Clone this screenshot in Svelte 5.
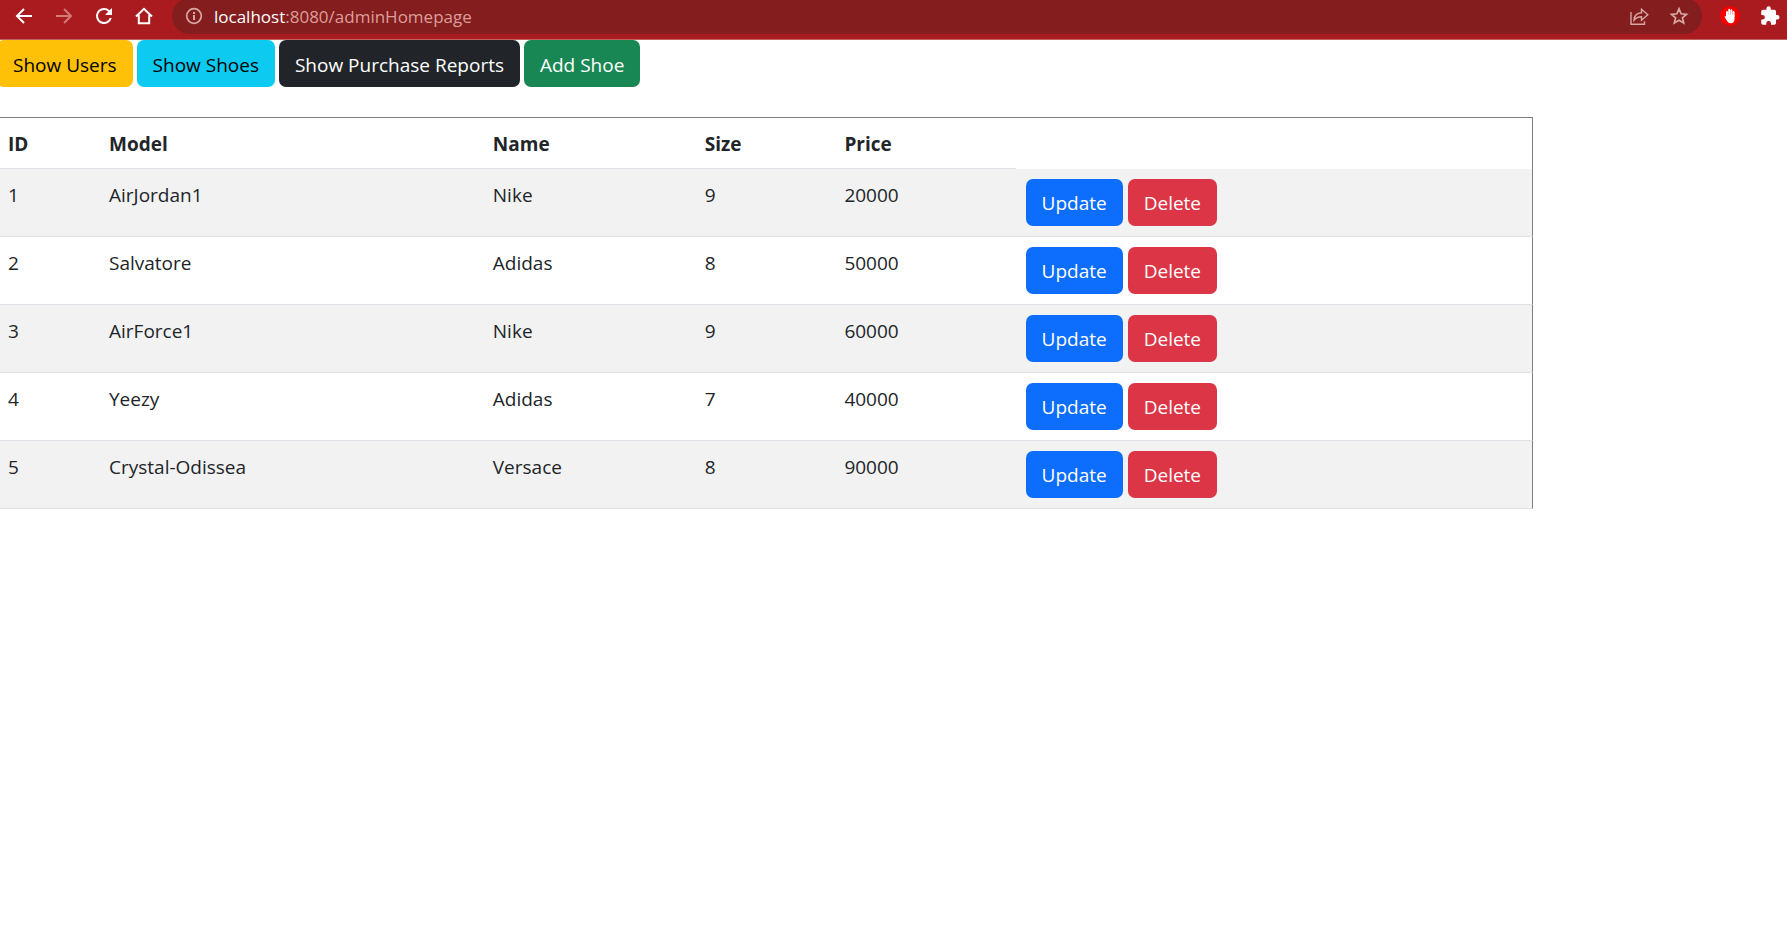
<script>
  const actions = [
    { label: 'Show Users', kind: 'warning' },
    { label: 'Show Shoes', kind: 'info' },
    { label: 'Show Purchase Reports', kind: 'dark' },
    { label: 'Add Shoe', kind: 'success' },
  ];

  const shoes = [
    { id: 1, model: 'AirJordan1', name: 'Nike', size: 9, price: 20000 },
    { id: 2, model: 'Salvatore', name: 'Adidas', size: 8, price: 50000 },
    { id: 3, model: 'AirForce1', name: 'Nike', size: 9, price: 60000 },
    { id: 4, model: 'Yeezy', name: 'Adidas', size: 7, price: 40000 },
    { id: 5, model: 'Crystal-Odissea', name: 'Versace', size: 8, price: 90000 },
  ];
</script>

<header class="toolbar">
  <button class="icon" aria-label="Back">
    <svg viewBox="0 0 24 24"><path d="M20 12H5M12 5l-7 7 7 7" class="line" /></svg>
  </button>
  <button class="icon faded" aria-label="Forward">
    <svg viewBox="0 0 24 24"><path d="M4 12h15M12 5l7 7-7 7" class="line" /></svg>
  </button>
  <button class="icon" aria-label="Reload">
    <svg viewBox="0 0 24 24"><path fill="currentColor" d="M17.650 6.350A7.960 7.960 0 0 0 12 4a8 8 0 1 0 7.730 10h-2.080A6 6 0 1 1 12 6c1.660 0 3.140.690 4.220 1.780L13 11h7V4z" /></svg>
  </button>
  <button class="icon" aria-label="Home">
    <svg viewBox="0 0 24 24"><path d="M4 12.500L12 4.800l8 7.700M6.800 11v8.200h10.400V11" class="line" /></svg>
  </button>

  <div class="address">
    <button class="icon soft" aria-label="Site information">
      <svg viewBox="0 0 24 24"><circle cx="12" cy="12" r="7.300" class="line thin" /><path fill="currentColor" d="M11 11h2v5h-2zM11 8h2v2h-2z" /></svg>
    </button>
    <div class="url"><span class="host">localhost</span>:8080/adminHomepage</div>
    <button class="icon soft" aria-label="Share">
      <svg viewBox="0 0 24 24"><path d="M4 8v12.200h13.500v-3M7 16.200c.3-4.700 3-7.200 7.500-7.400V5.200l6.300 5.600-6.300 5.400v-3.500c-3.200 0-5.500 1-7.500 3.500z" class="line fine" /></svg>
    </button>
    <button class="icon soft" aria-label="Bookmark">
      <svg viewBox="0 0 24 24"><path d="M12 4.800l2.100 5 5.400.5-4.100 3.500 1.300 5.300-4.700-2.800-4.700 2.800 1.300-5.300-4.100-3.500 5.400-.5z" class="line thin" /></svg>
    </button>
  </div>

  <button class="icon" aria-label="Ad blocker">
    <svg viewBox="0 0 24 24"><circle cx="12" cy="12" r="10" fill="#f80000" /><path d="M9 12V8M11.200 11V5.800M13.400 11V6.200M15.600 12V8" stroke="#fff" stroke-width="1.900" stroke-linecap="round" /><path fill="#fff" d="M8.050 10.500h8.500v4.500c0 2.600-1.200 4.300-3.600 4.300-2 0-3-.8-4-2.500l-2.200-3.600c-.3-.8.5-1.300 1.300-.5z" /></svg>
  </button>
  <button class="icon" aria-label="Extensions">
    <svg viewBox="0 0 24 24"><path fill="currentColor" d="M20.500 11H19V7a2 2 0 0 0-2-2h-4V3.500a2.500 2.500 0 0 0-5 0V5H4a2 2 0 0 0-2 2v3.800h1.500a2.700 2.700 0 0 1 0 5.400H2V20a2 2 0 0 0 2 2h3.800v-1.500a2.700 2.700 0 0 1 5.400 0V22H17a2 2 0 0 0 2-2v-4h1.500a2.500 2.500 0 0 0 0-5z" transform="translate(1.500 1.500) scale(.87)" /></svg>
  </button>
</header>

<main>
  <nav class="buttons">
    {#each actions as action}
      <button class="btn {action.kind}">{action.label}</button>
    {/each}
  </nav>

  <table>
    <thead>
      <tr>
        <th class="id">ID</th>
        <th class="model">Model</th>
        <th class="name">Name</th>
        <th class="size">Size</th>
        <th class="price">Price</th>
        <td class="tools"></td>
      </tr>
    </thead>
    <tbody>
      {#each shoes as shoe (shoe.id)}
        <tr>
          <td>{shoe.id}</td>
          <td>{shoe.model}</td>
          <td>{shoe.name}</td>
          <td>{shoe.size}</td>
          <td>{shoe.price}</td>
          <td class="tools">
            <div class="buttons">
              <button class="btn primary">Update</button>
              <button class="btn danger">Delete</button>
            </div>
          </td>
        </tr>
      {/each}
    </tbody>
  </table>
</main>

<style>
  :global(body) {
    margin: 0;
    background: #fff;
    color: #212529;
    font-family: 'Segoe UI', 'Open Sans', 'Noto Sans', sans-serif;
    font-size: 19px;
    line-height: 30px;
    overflow-x: hidden;
  }

  button {
    font: inherit;
    border: 0;
    cursor: pointer;
  }

  .toolbar {
    display: flex;
    align-items: flex-start;
    gap: 16px;
    box-sizing: border-box;
    height: 40px;
    padding: 0 5px 0 12px;
    background: #a91b1e;
    border-bottom: 1px solid #c0605f;
    color: #fff;
    overflow: hidden;
  }

  .icon {
    flex: none;
    display: block;
    width: 24px;
    height: 24px;
    margin-top: 4px;
    padding: 0;
    background: none;
    color: #fff;
  }

  .icon svg {
    display: block;
    width: 24px;
    height: 24px;
    fill: none;
  }

  .faded {
    color: #d4797b;
  }

  .soft {
    margin: 0;
    color: #d6a8a4;
  }

  .line {
    stroke: currentColor;
    stroke-width: 2;
  }

  .thin {
    stroke-width: 1.7;
  }

  .fine {
    stroke-width: 1.4;
  }

  .address {
    flex: 1;
    display: flex;
    align-items: center;
    gap: 16px;
    height: 36px;
    margin-top: -2px;
    padding: 0 11px 0 10px;
    border-radius: 18px;
    box-sizing: border-box;
    background: #841d1e;
  }

  .url {
    flex: 1;
    margin-left: -8px;
    padding-top: 2px;
    font-size: 17px;
    line-height: 24px;
    color: #dc9d9b;
  }

  .host {
    color: #fff;
  }

  .buttons {
    display: flex;
    gap: 5px;
  }

  nav.buttons {
    gap: 4px;
    margin-left: -3px;
  }

  .btn {
    height: 47px;
    padding: 0 16px;
    border-radius: 7px;
    color: #fff;
    white-space: nowrap;
  }

  nav .btn {
    padding-top: 2px;
  }

  .warning {
    background: #ffc107;
    color: #000;
  }

  .info {
    background: #0dcaf0;
    color: #000;
  }

  .dark {
    background: #212529;
  }

  .success {
    background: #198754;
  }

  .primary {
    background: #0d6efd;
  }

  .danger {
    background: #dc3545;
  }

  table {
    width: 85.9%;
    margin: 30px 0 0 -2px;
    table-layout: fixed;
    border-collapse: separate;
    border-spacing: 0;
    border-top: 1px solid #808080;
  }

  th,
  td {
    padding: 11px 10px 9px;
    text-align: left;
    vertical-align: top;
    border-bottom: 1px solid #dee2e6;
  }

  th {
    font-weight: 700;
  }

  .tools {
    padding: 10px;
    border-right: 1px solid #808080;
  }

  thead .tools {
    border-bottom: 0;
  }

  tbody tr:nth-child(odd) {
    background: #f2f2f2;
  }

  .id {
    width: 81px;
  }

  .model {
    width: 23.7%;
  }

  .name {
    width: 12.5%;
  }

  .size {
    width: 7.8%;
  }

  .price {
    width: 10.5%;
  }
</style>
